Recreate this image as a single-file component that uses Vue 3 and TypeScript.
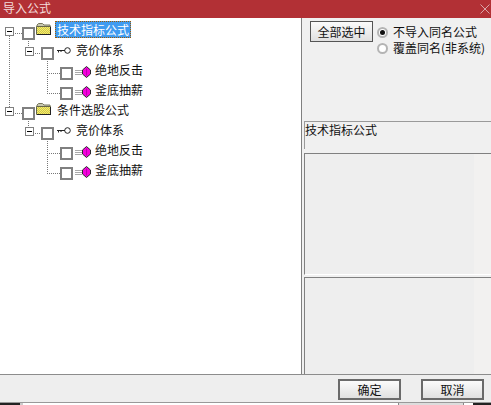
<script setup lang="ts">
interface Row { level: number; kind: 'folder' | 'key' | 'gem'; label: string; selected?: boolean; expander?: boolean }
const rows: Row[] = [
  { level: 0, kind: 'folder', label: '技术指标公式', selected: true, expander: true },
  { level: 1, kind: 'key', label: '竞价体系', expander: true },
  { level: 2, kind: 'gem', label: '绝地反击' },
  { level: 2, kind: 'gem', label: '釜底抽薪' },
  { level: 0, kind: 'folder', label: '条件选股公式', expander: true },
  { level: 1, kind: 'key', label: '竞价体系', expander: true },
  { level: 2, kind: 'gem', label: '绝地反击' },
  { level: 2, kind: 'gem', label: '釜底抽薪' },
]
</script>

<template>
  <div class="dialog">
    <header class="titlebar">
      <span class="title">导入公式</span>
      <svg class="close" width="10" height="10" viewBox="0 0 10 10"><path d="M0.5 0.5 9.5 9.5M9.5 0.5 0.5 9.5" stroke="#d9a5a7" fill="none" /></svg>
    </header>
    <div class="body">
      <section class="tree">
        <svg class="lines" width="301" height="356" viewBox="0 0 301 356">
          <path d="M9.500 18V95M28.500 21V29M47.500 41V75M13 15.500H22M33 35.500H41M47 55.500H60M47 75.500H60
                   M28.500 101V109M13 95.500H22M33 115.500H41M47.500 121V155M47 135.500H60M47 155.500H60"
            stroke="#777" stroke-dasharray="1 1" fill="none" />
        </svg>
        <div v-for="(r, i) in rows" :key="i" class="row" :class="'lvl' + r.level">
          <span v-if="r.expander" class="expander"><i></i></span>
          <span class="check"></span>
          <svg v-if="r.kind === 'folder'" class="ico folder" width="15" height="12" viewBox="0 0 15 12">
            <defs>
              <pattern :id="'dither' + i" width="2" height="2" patternUnits="userSpaceOnUse">
                <rect width="2" height="2" fill="#fdf35e" />
                <rect width="1" height="1" fill="#c9c25a" />
                <rect x="1" y="1" width="1" height="1" fill="#c9c25a" />
              </pattern>
            </defs>
            <path d="M1 2 2.500 0.500H6.500L8 2H14V4H1Z" fill="#c8c8b0" stroke="#77775f" stroke-width="1" />
            <path d="M0.500 3.500H14.500V11.500H0.500Z" :fill="'url(#dither' + i + ')'" stroke="#66664a" />
            <path d="M14 4H15V12H1V11H14Z" fill="#222" />
          </svg>
          <svg v-else-if="r.kind === 'key'" class="ico key" width="14" height="7" viewBox="0 0 14 7">
            <circle cx="10.500" cy="3.500" r="2.800" fill="#fff" stroke="#222" />
            <path d="M0 3.500H8M1.500 3.500V5.500M4 3.500V5" stroke="#222" fill="none" />
          </svg>
          <span v-else class="gemwrap">
            <svg class="bars" width="7" height="5" viewBox="0 0 7 5"><path d="M0 0.500H7M0 2.500H7M0 4.500H7" stroke="#aaa" /></svg>
            <svg class="ico gem" width="9" height="12" viewBox="0 0 9 12">
              <path d="M4.500 0.500 8.500 4 8.500 8 4.500 11.500 0.500 8 0.500 4Z" fill="#f400dc" stroke="#2a2a2a" />
              <path d="M4.500 2.500V9.500" stroke="#c000b0" fill="none" />
            </svg>
          </span>
          <span class="label" :class="{ selected: r.selected }">{{ r.label }}</span>
        </div>
      </section>
      <aside class="side">
        <div class="options">
          <button class="btn selectall" type="button">全部选中</button>
          <div class="radios">
            <label class="radio"><span class="dot on"></span>不导入同名公式</label>
            <label class="radio"><span class="dot"></span>覆盖同名(非系统)</label>
          </div>
        </div>
        <div class="group">技术指标公式</div>
        <div class="panel upper"><span class="strip"></span></div>
        <div class="panel lower"><span class="strip"></span></div>
      </aside>
    </div>
    <footer class="footer">
      <button class="btn action" type="button">确定</button>
      <button class="btn action" type="button">取消</button>
    </footer>
    <div class="under">
      <span class="u-dark"></span>
      <span class="u-light"></span>
      <span class="u-fill"></span>
      <span class="u-tab"></span>
      <span class="u-gap"></span>
      <span class="u-black"></span>
    </div>
  </div>
</template>

<style scoped>
.dialog {
  width: 491px;
  height: 405px;
  display: flex;
  flex-direction: column;
  overflow: hidden;
  background: #f0f0f0;
  font-family: "Noto Sans CJK SC", "Liberation Sans", sans-serif;
  font-size: 12px;
  color: #111;
}
.titlebar {
  height: 18px;
  flex: none;
  display: flex;
  align-items: center;
  justify-content: space-between;
  background: #b23035;
  padding: 0 1px 2px 3px;
  box-sizing: border-box;
}
.title { color: #f3dcdc; font-size: 12px; line-height: 16px; }
.close { margin-top: 2px; }
.body { flex: none; height: 357px; box-sizing: border-box; display: flex; border-bottom: 1px solid #8c8c8c; }
.tree {
  position: relative;
  width: 302px;
  flex: none;
  box-sizing: border-box;
  padding-top: 5px;
  background: #fff;
  border-right: 1px solid #808080;
}
.lines { position: absolute; left: 0; top: 0; }
.row { position: relative; height: 20px; display: flex; align-items: flex-start; }
.row.lvl0 { padding-left: 22px; }
.row.lvl1 { padding-left: 41px; }
.row.lvl2 { padding-left: 60px; }
.expander {
  position: absolute;
  top: 4px;
  width: 9px;
  height: 9px;
  box-sizing: border-box;
  border: 1px solid #808080;
  background: #fff;
  display: flex;
  align-items: center;
  justify-content: center;
}
.lvl0 .expander { left: 5px; }
.lvl1 .expander { left: 25px; }
.expander i { width: 5px; height: 1px; background: #000; }
.check {
  flex: none;
  width: 13px;
  height: 13px;
  margin-top: 4px;
  box-sizing: border-box;
  border: 2px solid #808080;
  background: #fff;
}
.ico { flex: none; display: block; }
.folder { margin: 0 0 0 1px; }
.folder + .label { margin-left: 4px; margin-top: -2px; }
.key { margin: 4px 0 0 3px; }
.key + .label { margin-left: 3px; margin-top: -2px; }
.gemwrap { display: flex; align-items: flex-start; margin-left: 2px; }
.bars { margin-top: 7px; }
.gem { margin-top: 3px; }
.gemwrap + .label { margin-left: 2px; margin-top: -2px; }
.label { line-height: 17px; padding: 0 2px; white-space: nowrap; height: 17px; }
.label.selected {
  background: #3f9bf0;
  color: #fff;
  outline: 1px dotted #a05a00;
  outline-offset: -1px;
}
.side { flex: 1; min-width: 0; display: flex; flex-direction: column; padding: 0 0 0 2px; }
.options { height: 103px; flex: none; display: flex; align-items: flex-start; padding: 3px 0 0 6px; box-sizing: border-box; }
.btn {
  box-sizing: border-box;
  padding: 0;
  font: inherit;
  color: #111;
  background: linear-gradient(#fbfbfb, #e0e0e0);
  border: 2px solid #6a6a6a;
}
.selectall { width: 63px; height: 21px; border-width: 1px; border-color: #555; }
.radios { margin: 3px 0 0 4px; display: flex; flex-direction: column; }
.radio { display: flex; align-items: center; height: 16px; line-height: 16px; gap: 5px; white-space: nowrap; }
.dot {
  width: 11px;
  height: 11px;
  box-sizing: border-box;
  border-radius: 50%;
  border: 2px solid #b4b4b4;
  background: #fff;
  display: flex;
  align-items: center;
  justify-content: center;
}
.dot.on::after { content: ""; width: 5px; height: 5px; border-radius: 50%; background: #111; }
.group {
  height: 28px;
  flex: none;
  box-sizing: border-box;
  border-top: 1px solid #9a9a9a;
  border-left: 1px solid #9a9a9a;
  line-height: 15px;
  white-space: nowrap;
}
.panel {
  position: relative;
  flex: none;
  box-sizing: border-box;
  background: #eeeeee;
  border-top: 1px solid #808080;
  border-left: 1px solid #808080;
}
.upper { height: 122px; margin-top: 4px; border-bottom: 1px solid #fff; }
.lower { height: 97px; margin-top: 2px; }
.strip { position: absolute; top: 0; bottom: 0; right: 0; width: 17px; background: #f2f1f0; }
.footer {
  height: 27px;
  flex: none;
  display: flex;
  justify-content: flex-end;
  gap: 20px;
  padding: 4px 7px 0 0;
  box-sizing: border-box;
  background: #eeeeee;
}
.action { width: 63px; height: 21px; }
.under { flex: 1; display: flex; border-top: 1px solid #999; background: #fff; }
.u-dark { width: 20px; background: #222; }
.u-light { width: 3px; background: #ccc; }
.u-fill { width: 375px; }
.u-tab { width: 66px; background: #ddd; border-left: 1px solid #888; border-right: 1px solid #888; box-sizing: border-box; }
.u-gap { width: 9px; }
.u-black { flex: 1; background: #222; }
</style>
